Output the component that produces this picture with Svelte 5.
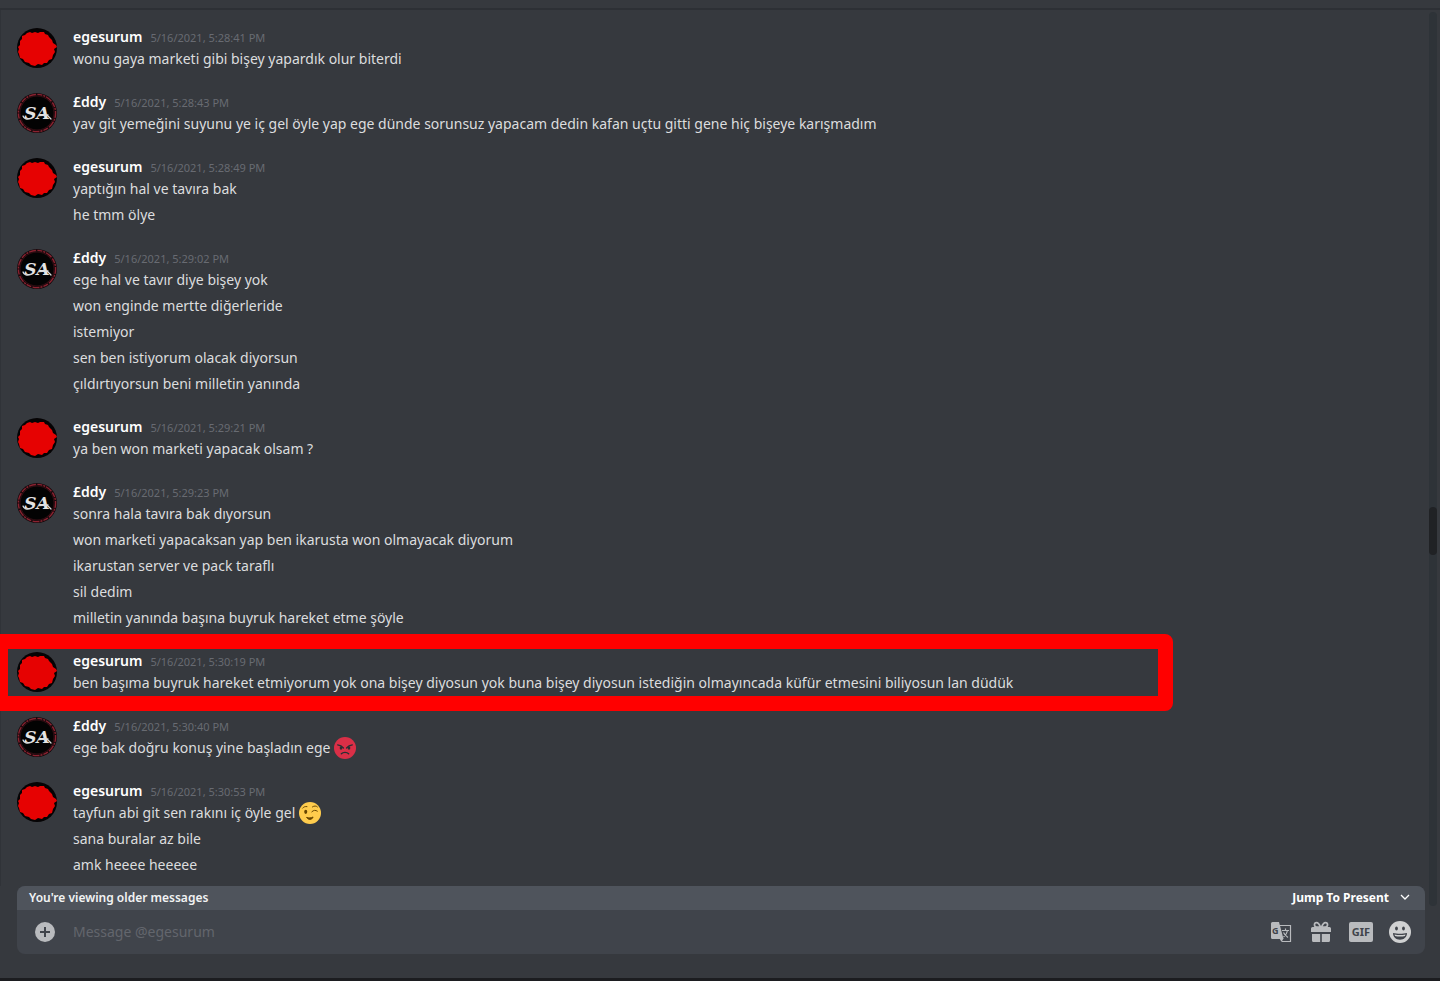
<script>
  const groups = [
    { who: 'egesurum', at: '5/16/2021, 5:28:41 PM', lines: ['wonu gaya marketi gibi bişey yapardık olur biterdi'] },
    { who: '£ddy', at: '5/16/2021, 5:28:43 PM', lines: ['yav git yemeğini suyunu ye iç gel öyle yap ege dünde sorunsuz yapacam dedin kafan uçtu gitti gene hiç bişeye karışmadım'] },
    { who: 'egesurum', at: '5/16/2021, 5:28:49 PM', lines: ['yaptığın hal ve tavıra bak', 'he tmm ölye'] },
    { who: '£ddy', at: '5/16/2021, 5:29:02 PM', lines: ['ege hal ve tavır diye bişey yok', 'won enginde mertte diğerleride', 'istemiyor', 'sen ben istiyorum olacak diyorsun', 'çıldırtıyorsun beni milletin yanında'] },
    { who: 'egesurum', at: '5/16/2021, 5:29:21 PM', lines: ['ya ben won marketi yapacak olsam ?'] },
    { who: '£ddy', at: '5/16/2021, 5:29:23 PM', lines: ['sonra hala tavıra bak dıyorsun', 'won marketi yapacaksan yap ben ikarusta won olmayacak diyorum', 'ikarustan server ve pack taraflı', 'sil dedim', 'milletin yanında başına buyruk hareket etme şöyle'] },
    { who: 'egesurum', at: '5/16/2021, 5:30:19 PM', marked: true, lines: ['ben başıma buyruk hareket etmiyorum yok ona bişey diyosun yok buna bişey diyosun istediğin olmayıncada küfür etmesini biliyosun lan düdük'] },
    { who: '£ddy', at: '5/16/2021, 5:30:40 PM', emoji: 'rage', lines: ['ege bak doğru konuş yine başladın ege'] },
    { who: 'egesurum', at: '5/16/2021, 5:30:53 PM', emoji: 'wink', lines: ['tayfun abi git sen rakını iç öyle gel', 'sana buralar az bile', 'amk heeee heeeee'] }
  ];
  let draft = $state('');
</script>

{#snippet redAvatar()}
  <svg class="avatar" viewBox="0 0 40 40" aria-hidden="true">
    <circle cx="20" cy="20" r="20" fill="#050304" />
    <path fill="#e60202" d="M10 5L13 4 15 5 18 4 21 5 23 4 27 4 28 6 31 7 32 9 35 12 36 15 39 17 40 19 37 21 38 24 36 27 35 31 32 32 30 35 27 35 25 37 21 36 18 38 14 37 12 35 8 34 6 31 3 30 2 26 1 24 2 21 1 19 3 17 3 13 5 11 5 8 8 7z" />
  </svg>
{/snippet}

{#snippet saAvatar()}
  <svg class="avatar" viewBox="0 0 40 40" aria-hidden="true">
    <circle cx="20" cy="20" r="20" fill="#17090c" />
    <circle cx="20" cy="20" r="18.6" fill="none" stroke="#8a2230" stroke-width="1.4" stroke-dasharray="5 1 2 1 7 1.5" />
    <circle cx="20" cy="20" r="17" fill="#030303" stroke="#3d1016" stroke-width=".8" />
    <text class="sa" x="20" y="26" text-anchor="middle">SA</text>
    <path d="M6 23c1 3 4 4 8 2.500M22 22.500l9-.5M31 23l3 3" fill="none" stroke="#dcdcdc" stroke-width="1.300" stroke-linecap="round" />
  </svg>
{/snippet}

{#snippet emoji(kind)}
  {#if kind === 'rage'}
    <svg class="emoji" viewBox="0 0 36 36" role="img" aria-label="rage">
      <circle cx="18" cy="18" r="18" fill="#da2f47" />
      <g fill="none" stroke="#292f33" stroke-linecap="round">
        <path stroke-width="2" d="M6 13c4 .5 7 2 9.500 5M30 13c-4 .5-7 2-9.500 5" />
        <path stroke-width="2.2" d="M12 27.500c3-3.200 9-3.200 12 0" />
      </g>
      <ellipse cx="11.500" cy="18" rx="2.200" ry="3" fill="#292f33" />
      <ellipse cx="24.500" cy="18" rx="2.200" ry="3" fill="#292f33" />
    </svg>
  {:else}
    <svg class="emoji" viewBox="0 0 36 36" role="img" aria-label="wink">
      <circle cx="18" cy="18" r="18" fill="#ffcc4d" />
      <g fill="none" stroke="#664500" stroke-linecap="round" stroke-width="1.600">
        <path d="M6 10c1.500-2 4-3 7-2.500M22 8c3-2 6-2 8 0M21 16c3-3 6-3 9-1" />
        <path fill="#664500" d="M13 25.500c3 1 7 .8 10-1-.5 2.500-3 4-5 4s-4-.5-5-3z" />
      </g>
      <ellipse cx="11" cy="16" rx="2.500" ry="3.500" fill="#664500" />
    </svg>
  {/if}
{/snippet}

<div class="page">
  <header class="topbar"></header>

  <main class="scroller">
    <ol class="messages">
      {#each groups as g}
        <li class="group">
          {#if g.who === 'egesurum'}{@render redAvatar()}{:else}{@render saAvatar()}{/if}
          <div class="body">
            <h3 class="head"><span class="name">{g.who}</span><time>{g.at}</time></h3>
            {#each g.lines as line, i}
              <p>{line}{#if i === 0 && g.emoji}{' '}{@render emoji(g.emoji)}{/if}</p>
            {/each}
          </div>
          {#if g.marked}<div class="mark"></div>{/if}
        </li>
      {/each}
    </ol>
    <div class="track"><div class="thumb"></div></div>
  </main>

  <form class="composer" onsubmit={(e) => e.preventDefault()}>
    <div class="older">
      <span>You're viewing older messages</span>
      <button type="button" class="jump">
        Jump To Present
        <svg width="16" height="16" viewBox="0 0 16 16" aria-hidden="true"><path d="M4 5l4 4 4-4" fill="none" stroke="#fff" stroke-width="1.300" /></svg>
      </button>
    </div>
    <div class="entry">
      <button type="button" class="icon" aria-label="Attach">
        <svg width="20" height="20" viewBox="0 0 20 20"><circle cx="10" cy="10" r="10" fill="#b9bbbe" /><path d="M10 5v10M5 10h10" stroke="#40444b" stroke-width="2" /></svg>
      </button>
      <input type="text" aria-label="Message @egesurum" placeholder="Message @egesurum" bind:value={draft} />
      <div class="tools">
        <button type="button" class="icon" aria-label="Translate">
          <svg width="24" height="24" viewBox="0 0 24 24">
            <path d="M10 5.500h11.500v16H13" fill="none" stroke="#b9bbbe" stroke-width="1.200" />
            <path d="M3.500 2h6.500l4.500 17H3.500A1.500 1.500 0 0 1 2 17.500v-14A1.500 1.500 0 0 1 3.500 2z" fill="#b9bbbe" />
            <path d="M10.500 18.500h4l-2 3.500z" fill="#b9bbbe" />
            <text class="g" x="3" y="14">G</text>
            <path d="M13 10.500h7M16.500 8.500v2M18.500 10.500c-.5 3-2 5-4 6.500M14.500 12.500c1 2 2.500 3.500 4.500 5" fill="none" stroke="#b9bbbe" stroke-width="1.200" />
          </svg>
        </button>
        <button type="button" class="icon" aria-label="Gift">
          <svg width="24" height="24" viewBox="0 0 24 24" fill="#b9bbbe">
            <path d="M3 14h8.200v8H4.500A1.500 1.500 0 0 1 3 20.500zM12.800 14H21v6.500a1.500 1.500 0 0 1-1.500 1.500h-6.700zM3.500 7h17A1.500 1.500 0 0 1 22 8.500V12H2V8.500A1.500 1.500 0 0 1 3.500 7z" />
            <path d="M11.500 7C10 3.500 8.800 2.700 7.600 2.700a1.900 1.900 0 0 0 0 4.300zM12.500 7c1.500-3.500 2.700-4.300 3.900-4.300a1.900 1.900 0 0 1 0 4.300z" fill="none" stroke="#b9bbbe" stroke-width="1.700" />
          </svg>
        </button>
        <button type="button" class="icon" aria-label="GIF"><span class="gif">GIF</span></button>
        <button type="button" class="icon" aria-label="Emoji">
          <svg width="22" height="22" viewBox="0 0 22 22">
            <circle cx="11" cy="11" r="11" fill="#d0d1d2" />
            <ellipse cx="7.500" cy="7.500" rx="1.400" ry="2.100" fill="#40444b" /><ellipse cx="14.500" cy="7.500" rx="1.400" ry="2.100" fill="#40444b" />
            <path d="M4 12c4 1 10 1 14 0 0 4-3 6.700-7 6.700S4 16 4 12z" fill="#40444b" />
            <path d="M5.500 13.500c4 .8 7 .8 11 0l-.5 1.500c-3 .7-7 .7-10 0z" fill="#d0d1d2" />
          </svg>
        </button>
      </div>
    </div>
  </form>
</div>

<style>
  :global(body) { margin: 0; background: #36393f; }
  .page {
    box-sizing: border-box;
    min-height: 100vh;
    display: flex;
    flex-direction: column;
    overflow: hidden;
    background: #36393e;
    border-bottom: 3px solid #1c1d20;
    color: #dcddde;
    font: 14px/22px "Noto Sans", sans-serif;
  }
  .topbar { height: 8px; border-bottom: 2px solid #2d3035; }
  .scroller { flex: 1; display: flex; box-shadow: inset 1px 0 #303338; }
  .messages { flex: 1; min-width: 0; list-style: none; margin: 0; padding: 14px 0 8px; display: flex; flex-direction: column; gap: 17px; }
  .group { position: relative; display: flex; align-items: flex-start; gap: 16px; padding: 0 17px; }
  .avatar { flex: none; width: 40px; height: 40px; margin-top: 4px; }
  .sa { font: italic bold 17px "DejaVu Serif", serif; fill: #e4e4e4; }
  .body { flex: 1; min-width: 0; display: flex; flex-direction: column; padding: 2px 0; }
  .head { margin: 0; display: flex; align-items: baseline; gap: 8px; height: 22px; font-size: 14px; line-height: 22px; }
  .name { color: #fff; font-weight: 600; }
  time { color: #686b72; font-size: 11px; font-weight: 400; }
  p { margin: 0; line-height: 22px; }
  p + p { margin-top: 4px; }
  .emoji { width: 22px; height: 22px; vertical-align: bottom; }
  .mark { position: absolute; left: -7px; top: -14px; bottom: -15px; right: 256px; border: 15px solid #f00; border-radius: 8px; pointer-events: none; }
  .track { flex: none; width: 8px; margin: 2px 3px -20px 0; background: #2e3338; border-radius: 4px; }
  .thumb { height: 48px; margin-top: 495px; background: #202225; border-radius: 4px; }
  .composer { margin: 0 15px 24px 17px; border-radius: 8px; overflow: hidden; background: #40444b; }
  .older { display: flex; justify-content: space-between; align-items: center; height: 24px; padding: 0 12px; background: #4f545c; color: #f2f3f4; font-size: 12px; font-weight: 600; }
  button { border: 0; padding: 0; background: none; color: inherit; font: inherit; cursor: pointer; }
  .jump { display: flex; align-items: center; gap: 8px; color: #fff; font-weight: 700; }
  .entry { display: flex; align-items: center; height: 44px; padding: 0 14px 0 18px; }
  .icon { display: flex; align-items: center; justify-content: center; flex: none; }
  input { flex: 1; min-width: 0; margin: 0 18px; padding: 0; border: 0; outline: 0; background: none; color: #dcddde; font: inherit; }
  input::placeholder { color: #63666d; opacity: 1; }
  .tools { display: flex; align-items: center; gap: 16px; }
  .gif { width: 24px; border-radius: 2px; background: #b9bbbe; color: #40444b; font: bold 11px/20px "Noto Sans", sans-serif; text-align: center; }
  .g { font: bold 9px "Noto Sans", sans-serif; fill: #40444b; }
</style>
